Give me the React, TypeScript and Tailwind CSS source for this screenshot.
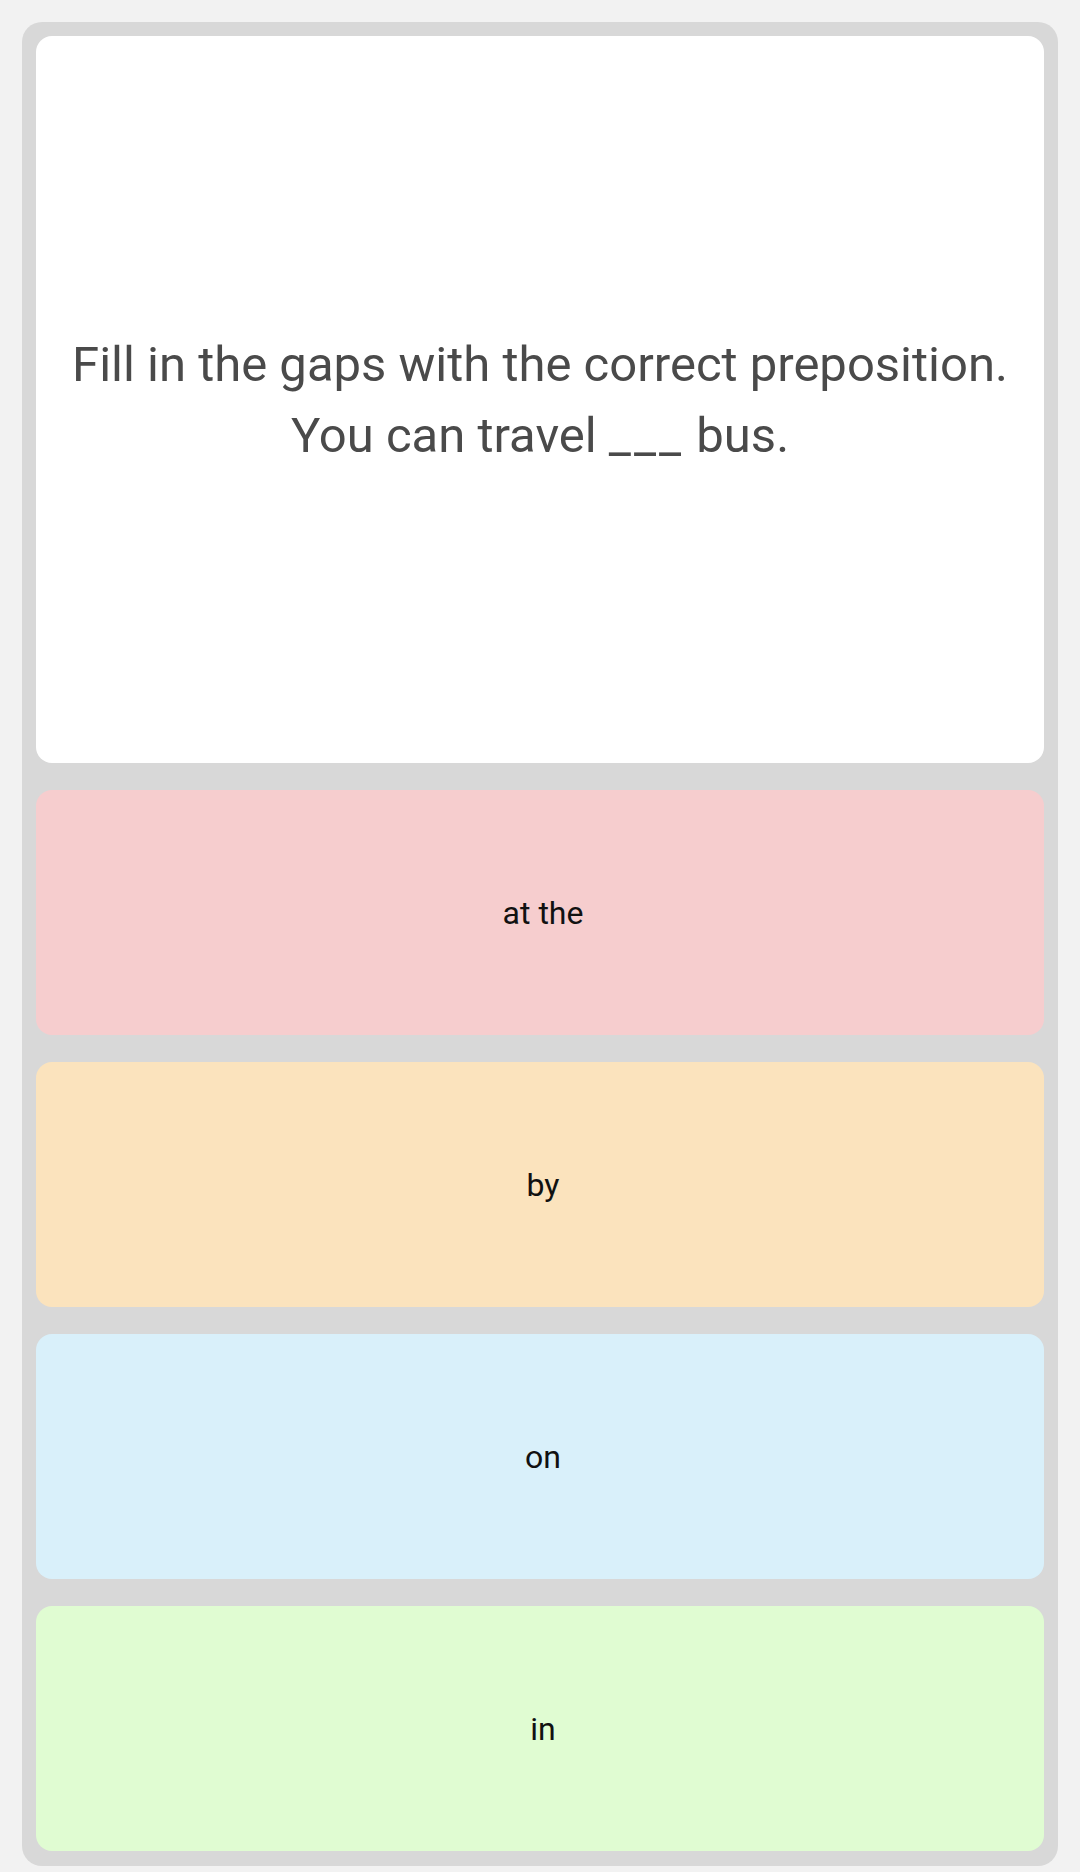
export default function App() {
  const options = [
    { label: "at the", bg: "bg-[#f6cdce]" },
    { label: "by", bg: "bg-[#fbe3bd]" },
    { label: "on", bg: "bg-[#d9f0fa]" },
    { label: "in", bg: "bg-[#e0fcd2]" },
  ];

  return (
    <div
      className="min-h-[1872px] w-full bg-[#f2f2f2] px-[22px] pt-[22px] pb-[5px]"
      style={{ fontFamily: "Roboto, 'Liberation Sans', sans-serif" }}
    >
      <div className="flex flex-col gap-[27px] rounded-[20px] bg-[#d8d8d8] p-[14px] pb-[15px]">
        {/* question */}
        <div className="flex h-[727px] flex-col items-center justify-center whitespace-nowrap rounded-[16px] bg-white text-center text-[49px] leading-[71px] text-[#4a4a4a]">
          <p>Fill in the gaps with the correct preposition.</p>
          <p>
            You can travel <span className="tracking-[3px]">___</span> bus.
          </p>
        </div>

        {/* answers */}
        {options.map((o) => (
          <button
            key={o.label}
            className={`flex h-[245px] items-center justify-center rounded-[16px] pl-[6px] ${o.bg} text-[32px] text-[#111]`}
          >
            {o.label}
          </button>
        ))}
      </div>
    </div>
  );
}
